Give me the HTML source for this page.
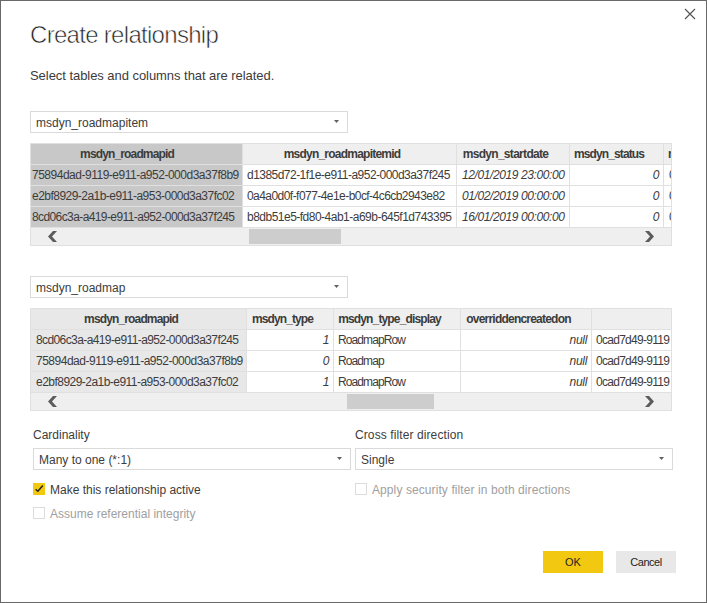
<!DOCTYPE html>
<html><head><meta charset="utf-8">
<style>
*{margin:0;padding:0;box-sizing:border-box}
html,body{width:707px;height:603px;overflow:hidden;background:#fff}
body{position:relative;font-family:"Liberation Sans",sans-serif;color:#3c3c3c;font-size:12px}
.a{position:absolute;white-space:nowrap}
#frame{position:absolute;left:0;top:0;width:707px;height:603px;border:1px solid #686868}
.title{left:30px;top:21px;font-size:24px;line-height:27px;color:#222;letter-spacing:-0.7px;-webkit-text-stroke:0.6px #fff}
.sub{left:30px;top:68px;font-size:13px;line-height:15px;letter-spacing:-0.05px}
.dd{position:absolute;border:1px solid #dadada;background:#fff;height:22px;width:318px}
.dd .t{position:absolute;left:5px;top:4px;line-height:14px;font-size:12px;white-space:nowrap}
.dd svg{position:absolute;left:303px;top:8px}
.tbl{position:absolute;left:30px;width:642px;height:103px;border:1px solid #e0e0e0;overflow:hidden;background:#fff}
.bg{position:absolute}
.hl{position:absolute;left:0;width:640px;height:1px;background:#e0e0e0}
.vl{position:absolute;top:0;width:1px;height:83px;background:#e0e0e0}
.c{position:absolute;height:20px;line-height:20px;white-space:nowrap;font-size:12px}
.hd{font-weight:bold;letter-spacing:-0.8px}
.id{letter-spacing:-0.45px}
.it{font-style:italic;letter-spacing:-0.3px}
.tx{letter-spacing:-0.8px}
.sb{position:absolute;left:0;top:84px;width:640px;height:17px;background:#efefef}
.thumb{position:absolute;top:1px;height:15px;background:#cdcdcd}
.ar{position:absolute}
.lbl{font-size:12px;line-height:14px}
.cb{position:absolute;width:12px;height:12px;border:1px solid #dcdcdc}
.dis{color:#a0a0a0}
.btn{position:absolute;top:551px;width:60px;height:22px;font-size:11px;line-height:22px;text-align:center;color:#252423}
</style></head><body>
<div id="frame"></div>
<svg class="a" style="left:684px;top:8px" width="12" height="12" viewBox="0 0 12 12"><path d="M1 1L11 11M11 1L1 11" stroke="#555" stroke-width="1.2" fill="none"/></svg>
<div class="a title">Create relationship</div>
<div class="a sub">Select tables and columns that are related.</div>
<div class="dd" style="left:30px;top:111px"><div class="t">msdyn_roadmapitem</div><svg width="5" height="3" viewBox="0 0 5 3"><path d="M0 0H5L2.5 3Z" fill="#606060"/></svg></div>
<div class="tbl" style="top:143px">
<div class="bg" style="left:0px;width:211px;top:0;height:83px;background:#c8c8c8"></div>
<div class="bg" style="left:212px;width:213px;top:0;height:20px;background:#efefef"></div>
<div class="bg" style="left:426px;width:112px;top:0;height:20px;background:#efefef"></div>
<div class="bg" style="left:539px;width:93px;top:0;height:20px;background:#efefef"></div>
<div class="bg" style="left:633px;width:7px;top:0;height:20px;background:#efefef"></div>
<div class="hl" style="top:20px"></div>
<div class="hl" style="top:41px"></div>
<div class="hl" style="top:62px"></div>
<div class="hl" style="top:83px"></div>
<div class="vl" style="left:211px"></div>
<div class="vl" style="left:425px"></div>
<div class="vl" style="left:538px"></div>
<div class="vl" style="left:632px"></div>
<div class="c hd" style="letter-spacing:-0.86px;left:0px;width:192px;text-align:center;top:0">msdyn_roadmapid</div>
<div class="c hd" style="letter-spacing:-0.77px;left:212px;width:198px;text-align:center;top:0">msdyn_roadmapitemid</div>
<div class="c hd" style="letter-spacing:-0.7px;left:426px;width:97px;text-align:center;top:0">msdyn_startdate</div>
<div class="c hd" style="letter-spacing:-0.88px;left:539px;width:78px;text-align:center;top:0">msdyn_status</div>
<div class="c hd" style="left:637px;top:0">m</div>
<div class="c id" style="letter-spacing:-0.49px;left:1px;top:21px">75894dad-9119-e911-a952-000d3a37f8b9</div>
<div class="c id" style="letter-spacing:-0.53px;left:216px;top:21px">d1385d72-1f1e-e911-a952-000d3a37f245</div>
<div class="c it" style="letter-spacing:-0.4px;left:431px;top:21px">12/01/2019 23:00:00</div>
<div class="c it" style="right:12px;top:21px">0</div>
<div class="c id" style="left:638px;top:21px">0</div>
<div class="c id" style="letter-spacing:-0.53px;left:1px;top:42px">e2bf8929-2a1b-e911-a953-000d3a37fc02</div>
<div class="c id" style="letter-spacing:-0.55px;left:216px;top:42px">0a4a0d0f-f077-4e1e-b0cf-4c6cb2943e82</div>
<div class="c it" style="letter-spacing:-0.4px;left:431px;top:42px">01/02/2019 00:00:00</div>
<div class="c it" style="right:12px;top:42px">0</div>
<div class="c id" style="left:638px;top:42px">0</div>
<div class="c id" style="letter-spacing:-0.6px;left:1px;top:63px">8cd06c3a-a419-e911-a952-000d3a37f245</div>
<div class="c id" style="letter-spacing:-0.51px;left:216px;top:63px">b8db51e5-fd80-4ab1-a69b-645f1d743395</div>
<div class="c it" style="letter-spacing:-0.4px;left:431px;top:63px">16/01/2019 00:00:00</div>
<div class="c it" style="right:12px;top:63px">0</div>
<div class="c id" style="left:638px;top:63px">0</div>
<div class="sb"><div class="thumb" style="left:218px;width:92px"></div><svg class="ar" style="left:17px;top:3px" width="10" height="12" viewBox="0 0 10 12"><path d="M5 0H9L4 5.5L9 11H5L0 5.5Z" fill="#5c5c5c"/></svg><svg class="ar" style="left:614px;top:3px" width="10" height="12" viewBox="0 0 10 12"><path d="M0 0H4L9 5.5L4 11H0L5 5.5Z" fill="#5c5c5c"/></svg></div>
</div>
<div class="dd" style="left:30px;top:276px"><div class="t">msdyn_roadmap</div><svg width="5" height="3" viewBox="0 0 5 3"><path d="M0 0H5L2.5 3Z" fill="#606060"/></svg></div>
<div class="tbl" style="top:308px">
<div class="bg" style="left:0px;width:215px;top:0;height:83px;background:#e8e8e8"></div>
<div class="bg" style="left:216px;width:86px;top:0;height:20px;background:#efefef"></div>
<div class="bg" style="left:303px;width:126px;top:0;height:20px;background:#efefef"></div>
<div class="bg" style="left:430px;width:130px;top:0;height:20px;background:#efefef"></div>
<div class="bg" style="left:561px;width:79px;top:0;height:20px;background:#efefef"></div>
<div class="hl" style="top:20px"></div>
<div class="hl" style="top:41px"></div>
<div class="hl" style="top:62px"></div>
<div class="hl" style="top:83px"></div>
<div class="vl" style="left:215px"></div>
<div class="vl" style="left:302px"></div>
<div class="vl" style="left:429px"></div>
<div class="vl" style="left:560px"></div>
<div class="c hd" style="letter-spacing:-0.86px;left:0px;width:200px;text-align:center;top:0">msdyn_roadmapid</div>
<div class="c hd" style="letter-spacing:-0.89px;left:216px;width:71px;text-align:center;top:0">msdyn_type</div>
<div class="c hd" style="letter-spacing:-0.86px;left:303px;width:111px;text-align:center;top:0">msdyn_type_display</div>
<div class="c hd" style="letter-spacing:-0.78px;left:430px;width:115px;text-align:center;top:0">overriddencreatedon</div>
<div class="c id" style="letter-spacing:-0.6px;left:5px;top:21px">8cd06c3a-a419-e911-a952-000d3a37f245</div>
<div class="c it" style="right:342px;top:21px">1</div>
<div class="c tx" style="letter-spacing:-0.9px;left:307px;top:21px">RoadmapRow</div>
<div class="c it" style="right:84px;top:21px">null</div>
<div class="c id" style="letter-spacing:-0.72px;left:565px;top:21px">0cad7d49-9119</div>
<div class="c id" style="letter-spacing:-0.49px;left:5px;top:42px">75894dad-9119-e911-a952-000d3a37f8b9</div>
<div class="c it" style="right:342px;top:42px">0</div>
<div class="c tx" style="letter-spacing:-0.9px;left:307px;top:42px">Roadmap</div>
<div class="c it" style="right:84px;top:42px">null</div>
<div class="c id" style="letter-spacing:-0.72px;left:565px;top:42px">0cad7d49-9119</div>
<div class="c id" style="letter-spacing:-0.53px;left:5px;top:63px">e2bf8929-2a1b-e911-a953-000d3a37fc02</div>
<div class="c it" style="right:342px;top:63px">1</div>
<div class="c tx" style="letter-spacing:-0.9px;left:307px;top:63px">RoadmapRow</div>
<div class="c it" style="right:84px;top:63px">null</div>
<div class="c id" style="letter-spacing:-0.72px;left:565px;top:63px">0cad7d49-9119</div>
<div class="sb"><div class="thumb" style="left:316px;width:87px"></div><svg class="ar" style="left:17px;top:3px" width="10" height="12" viewBox="0 0 10 12"><path d="M5 0H9L4 5.5L9 11H5L0 5.5Z" fill="#5c5c5c"/></svg><svg class="ar" style="left:614px;top:3px" width="10" height="12" viewBox="0 0 10 12"><path d="M0 0H4L9 5.5L4 11H0L5 5.5Z" fill="#5c5c5c"/></svg></div>
</div>
<div class="a lbl" style="left:33px;top:428px">Cardinality</div>
<div class="dd" style="left:33px;top:448px"><div class="t" style="left:5px">Many to one (*:1)</div><svg width="5" height="3" viewBox="0 0 5 3"><path d="M0 0H5L2.5 3Z" fill="#606060"/></svg></div>
<div class="a lbl" style="left:355px;top:428px;letter-spacing:0.1px">Cross filter direction</div>
<div class="dd" style="left:355px;top:448px"><div class="t" style="left:5px">Single</div><svg width="5" height="3" viewBox="0 0 5 3"><path d="M0 0H5L2.5 3Z" fill="#606060"/></svg></div>
<div class="cb" style="left:33px;top:483px;background:#f2c811;border-color:#f2c811"><svg style="position:absolute;left:-1px;top:-1px" width="12" height="12" viewBox="0 0 12 12"><path d="M2.6 6.2L4.9 8.3L9.8 2.6" stroke="#252423" stroke-width="1.5" fill="none"/></svg></div>
<div class="a lbl" style="left:50px;top:483px">Make this relationship active</div>
<div class="cb" style="left:355px;top:483px"></div>
<div class="a lbl dis" style="left:372px;top:483px;letter-spacing:0.09px">Apply security filter in both directions</div>
<div class="cb" style="left:33px;top:507px"></div>
<div class="a lbl dis" style="left:50px;top:507px">Assume referential integrity</div>
<div class="btn" style="left:543px;background:#f2c811">OK</div>
<div class="btn" style="left:616px;background:#e8e8e8;letter-spacing:-0.45px">Cancel</div>
</body></html>
